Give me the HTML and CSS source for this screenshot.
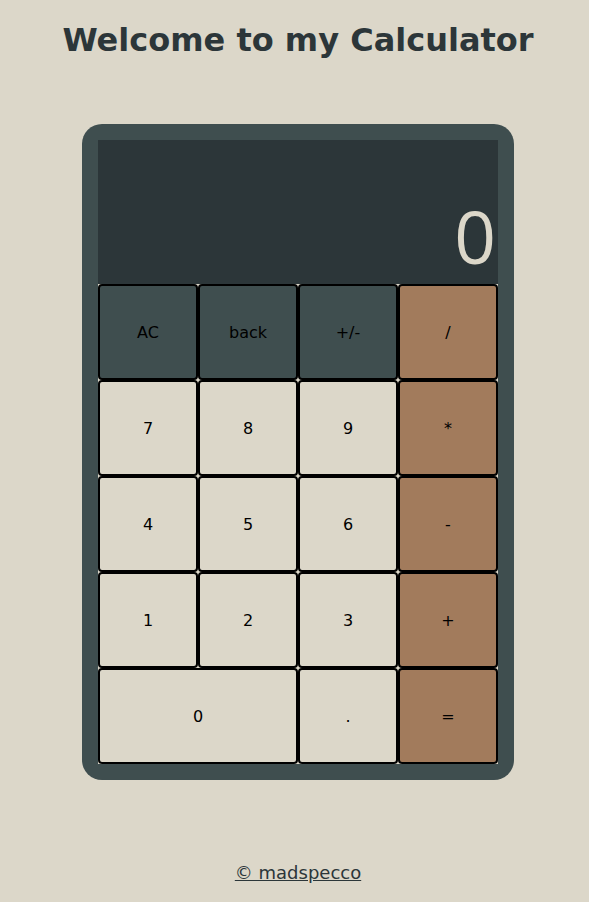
FILE: index.html
```html
<!DOCTYPE html>
<html lang="en">
<head>
<meta charset="utf-8">
<title>Calculator</title>
<link rel="stylesheet" href="styles.css">
</head>
<body>
  <h1 class="title">Welcome to my Calculator</h1>
  <main class="calculator">
    <div class="display">0</div>
    <div class="keys">
      <button class="key key-fn">AC</button>
      <button class="key key-fn">back</button>
      <button class="key key-fn">+/-</button>
      <button class="key key-op">/</button>
      <button class="key">7</button>
      <button class="key">8</button>
      <button class="key">9</button>
      <button class="key key-op">*</button>
      <button class="key">4</button>
      <button class="key">5</button>
      <button class="key">6</button>
      <button class="key key-op">-</button>
      <button class="key">1</button>
      <button class="key">2</button>
      <button class="key">3</button>
      <button class="key key-op">+</button>
      <button class="key key-wide">0</button>
      <button class="key">.</button>
      <button class="key key-op">=</button>
    </div>
  </main>
  <footer class="footer"><a class="footer-link" href="#">© madspecco</a></footer>
</body>
</html>
```

FILE: styles.css
```css
html, body {
  margin: 0;
  padding: 0;
}

body {
  background: #DCD7C9;
  font-family: "DejaVu Sans", Verdana, sans-serif;
  color: #2C3639;
  padding-left: 7px;
}

.title {
  margin: 21px 0 0;
  text-align: center;
  font-size: 32px;
  font-weight: bold;
  color: #2C3639;
}

.calculator {
  width: 400px;
  margin: 65px auto 0;
  padding: 16px;
  background: #3F4E4F;
  border-radius: 20px;
}

.display {
  height: 144px;
  background: #2C3639;
  color: #DCD7C9;
  font-family: "Open Sans", sans-serif;
  font-weight: 400;
  font-size: 73px;
  line-height: 1;
  display: flex;
  align-items: flex-end;
  justify-content: flex-end;
  padding-right: 2px;
  padding-bottom: 12px;
  box-sizing: border-box;
}

.keys {
  display: grid;
  grid-template-columns: repeat(4, 100px);
  grid-auto-rows: 96px;
  background: #DCD7C9;
}

.key {
  margin: 0;
  border: 2px solid #000;
  border-radius: 4px;
  background: #DCD7C9;
  color: #000;
  font-family: "DejaVu Sans", Verdana, sans-serif;
  font-size: 16px;
  padding: 0;
}

.key-fn {
  background: #3F4E4F;
}

.key-op {
  background: #A27B5C;
}

.key-wide {
  grid-column: span 2;
}

.footer {
  margin-top: 82px;
  text-align: center;
  font-size: 18px;
}

.footer-link {
  color: #2C3639;
}
```
